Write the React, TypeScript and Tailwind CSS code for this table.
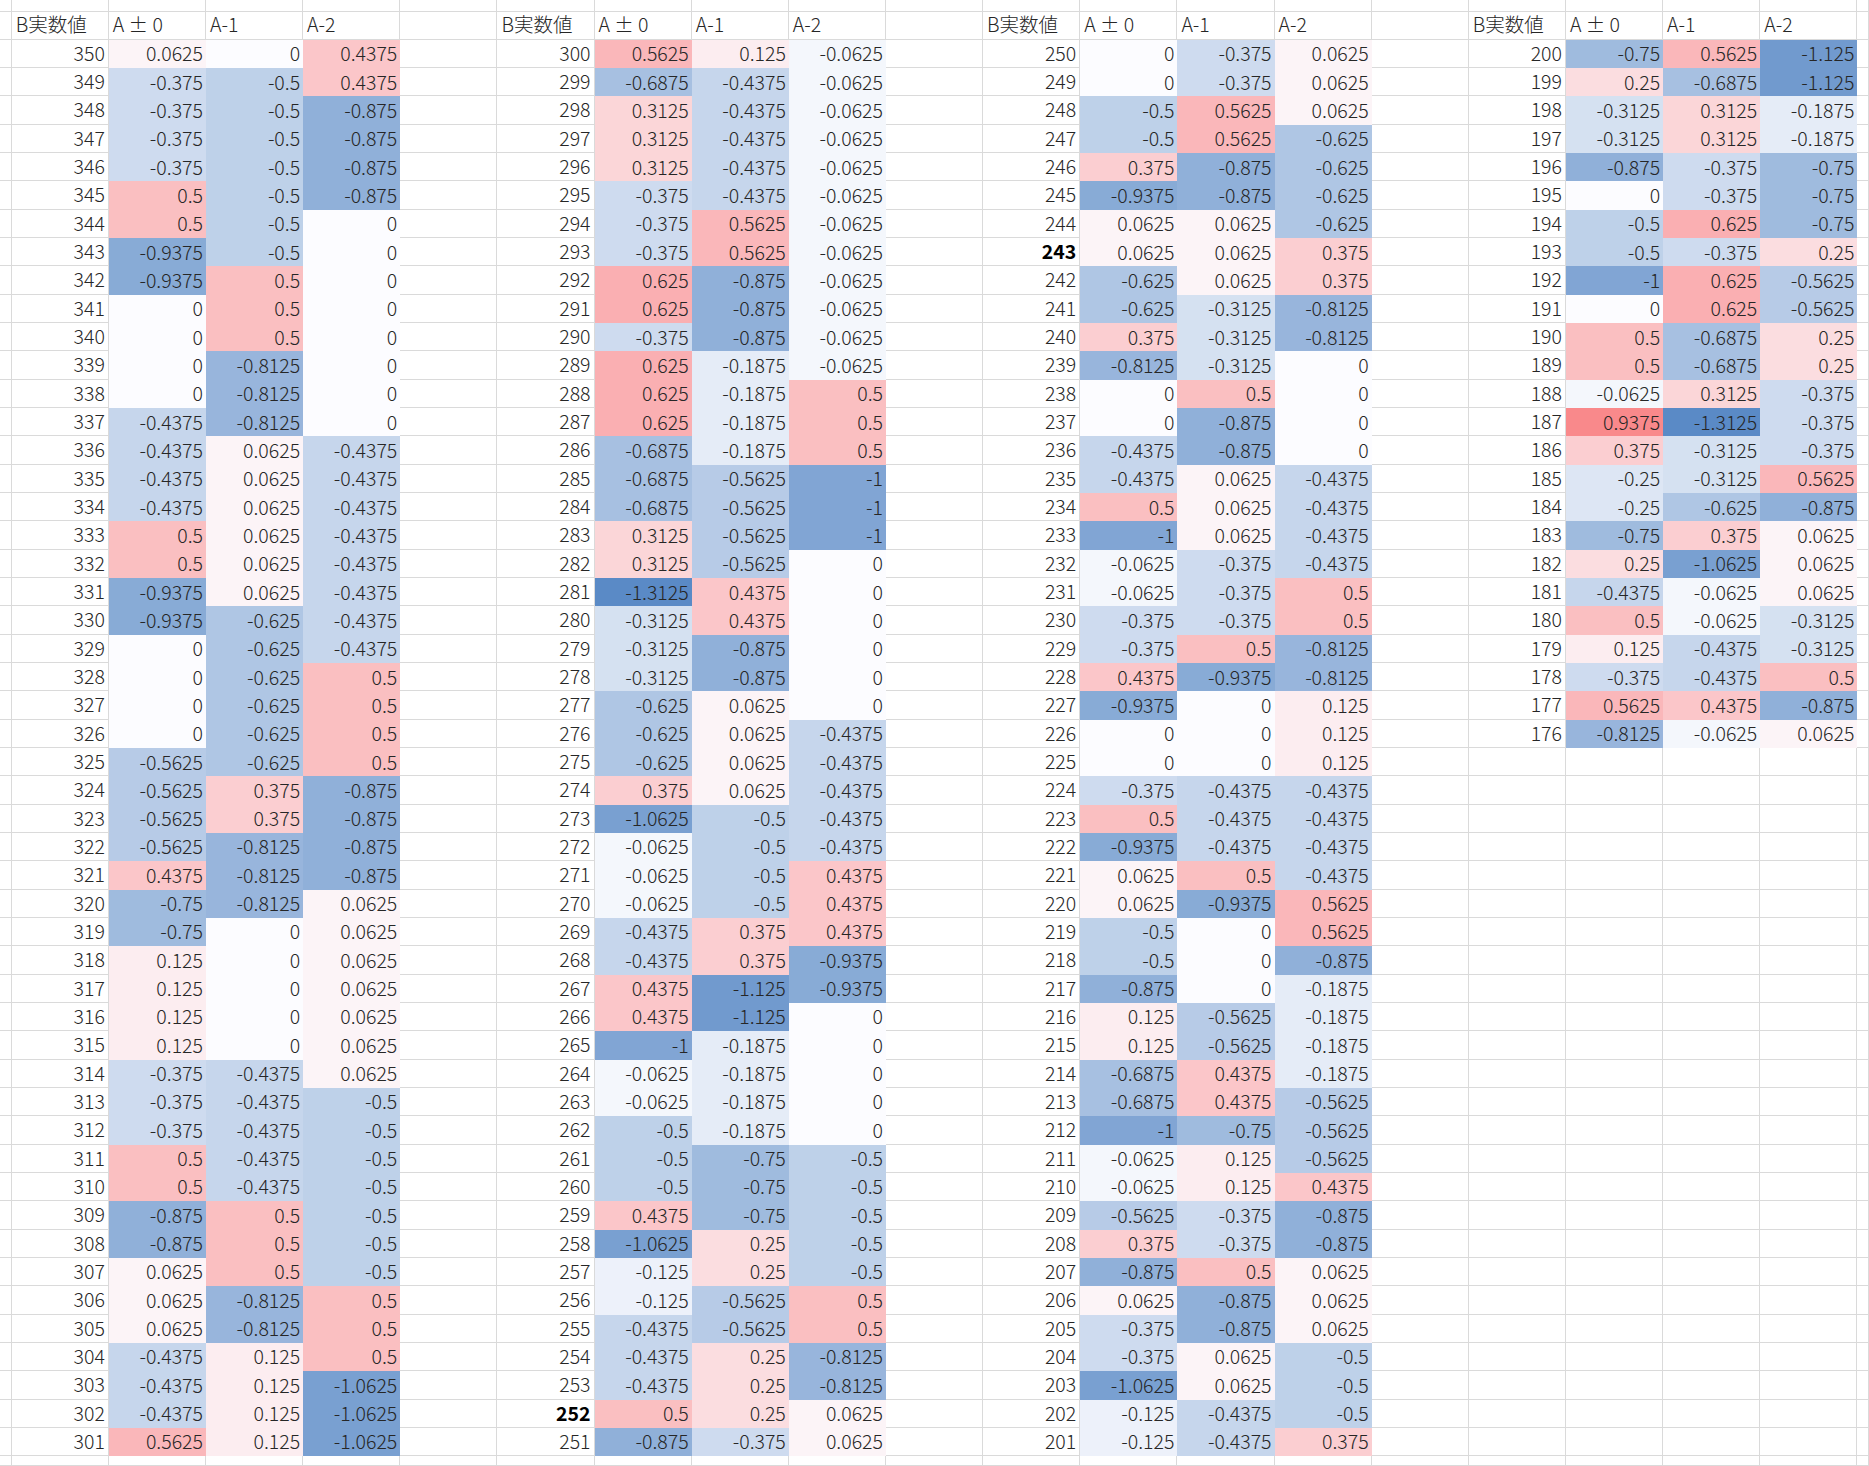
import React from "react";

const G1 = `350 0.0625 0 0.4375
349 -0.375 -0.5 0.4375
348 -0.375 -0.5 -0.875
347 -0.375 -0.5 -0.875
346 -0.375 -0.5 -0.875
345 0.5 -0.5 -0.875
344 0.5 -0.5 0
343 -0.9375 -0.5 0
342 -0.9375 0.5 0
341 0 0.5 0
340 0 0.5 0
339 0 -0.8125 0
338 0 -0.8125 0
337 -0.4375 -0.8125 0
336 -0.4375 0.0625 -0.4375
335 -0.4375 0.0625 -0.4375
334 -0.4375 0.0625 -0.4375
333 0.5 0.0625 -0.4375
332 0.5 0.0625 -0.4375
331 -0.9375 0.0625 -0.4375
330 -0.9375 -0.625 -0.4375
329 0 -0.625 -0.4375
328 0 -0.625 0.5
327 0 -0.625 0.5
326 0 -0.625 0.5
325 -0.5625 -0.625 0.5
324 -0.5625 0.375 -0.875
323 -0.5625 0.375 -0.875
322 -0.5625 -0.8125 -0.875
321 0.4375 -0.8125 -0.875
320 -0.75 -0.8125 0.0625
319 -0.75 0 0.0625
318 0.125 0 0.0625
317 0.125 0 0.0625
316 0.125 0 0.0625
315 0.125 0 0.0625
314 -0.375 -0.4375 0.0625
313 -0.375 -0.4375 -0.5
312 -0.375 -0.4375 -0.5
311 0.5 -0.4375 -0.5
310 0.5 -0.4375 -0.5
309 -0.875 0.5 -0.5
308 -0.875 0.5 -0.5
307 0.0625 0.5 -0.5
306 0.0625 -0.8125 0.5
305 0.0625 -0.8125 0.5
304 -0.4375 0.125 0.5
303 -0.4375 0.125 -1.0625
302 -0.4375 0.125 -1.0625
301 0.5625 0.125 -1.0625`;

const G2 = `300 0.5625 0.125 -0.0625
299 -0.6875 -0.4375 -0.0625
298 0.3125 -0.4375 -0.0625
297 0.3125 -0.4375 -0.0625
296 0.3125 -0.4375 -0.0625
295 -0.375 -0.4375 -0.0625
294 -0.375 0.5625 -0.0625
293 -0.375 0.5625 -0.0625
292 0.625 -0.875 -0.0625
291 0.625 -0.875 -0.0625
290 -0.375 -0.875 -0.0625
289 0.625 -0.1875 -0.0625
288 0.625 -0.1875 0.5
287 0.625 -0.1875 0.5
286 -0.6875 -0.1875 0.5
285 -0.6875 -0.5625 -1
284 -0.6875 -0.5625 -1
283 0.3125 -0.5625 -1
282 0.3125 -0.5625 0
281 -1.3125 0.4375 0
280 -0.3125 0.4375 0
279 -0.3125 -0.875 0
278 -0.3125 -0.875 0
277 -0.625 0.0625 0
276 -0.625 0.0625 -0.4375
275 -0.625 0.0625 -0.4375
274 0.375 0.0625 -0.4375
273 -1.0625 -0.5 -0.4375
272 -0.0625 -0.5 -0.4375
271 -0.0625 -0.5 0.4375
270 -0.0625 -0.5 0.4375
269 -0.4375 0.375 0.4375
268 -0.4375 0.375 -0.9375
267 0.4375 -1.125 -0.9375
266 0.4375 -1.125 0
265 -1 -0.1875 0
264 -0.0625 -0.1875 0
263 -0.0625 -0.1875 0
262 -0.5 -0.1875 0
261 -0.5 -0.75 -0.5
260 -0.5 -0.75 -0.5
259 0.4375 -0.75 -0.5
258 -1.0625 0.25 -0.5
257 -0.125 0.25 -0.5
256 -0.125 -0.5625 0.5
255 -0.4375 -0.5625 0.5
254 -0.4375 0.25 -0.8125
253 -0.4375 0.25 -0.8125
*252 0.5 0.25 0.0625
251 -0.875 -0.375 0.0625`;

const G3 = `250 0 -0.375 0.0625
249 0 -0.375 0.0625
248 -0.5 0.5625 0.0625
247 -0.5 0.5625 -0.625
246 0.375 -0.875 -0.625
245 -0.9375 -0.875 -0.625
244 0.0625 0.0625 -0.625
*243 0.0625 0.0625 0.375
242 -0.625 0.0625 0.375
241 -0.625 -0.3125 -0.8125
240 0.375 -0.3125 -0.8125
239 -0.8125 -0.3125 0
238 0 0.5 0
237 0 -0.875 0
236 -0.4375 -0.875 0
235 -0.4375 0.0625 -0.4375
234 0.5 0.0625 -0.4375
233 -1 0.0625 -0.4375
232 -0.0625 -0.375 -0.4375
231 -0.0625 -0.375 0.5
230 -0.375 -0.375 0.5
229 -0.375 0.5 -0.8125
228 0.4375 -0.9375 -0.8125
227 -0.9375 0 0.125
226 0 0 0.125
225 0 0 0.125
224 -0.375 -0.4375 -0.4375
223 0.5 -0.4375 -0.4375
222 -0.9375 -0.4375 -0.4375
221 0.0625 0.5 -0.4375
220 0.0625 -0.9375 0.5625
219 -0.5 0 0.5625
218 -0.5 0 -0.875
217 -0.875 0 -0.1875
216 0.125 -0.5625 -0.1875
215 0.125 -0.5625 -0.1875
214 -0.6875 0.4375 -0.1875
213 -0.6875 0.4375 -0.5625
212 -1 -0.75 -0.5625
211 -0.0625 0.125 -0.5625
210 -0.0625 0.125 0.4375
209 -0.5625 -0.375 -0.875
208 0.375 -0.375 -0.875
207 -0.875 0.5 0.0625
206 0.0625 -0.875 0.0625
205 -0.375 -0.875 0.0625
204 -0.375 0.0625 -0.5
203 -1.0625 0.0625 -0.5
202 -0.125 -0.4375 -0.5
201 -0.125 -0.4375 0.375`;

const G4 = `200 -0.75 0.5625 -1.125
199 0.25 -0.6875 -1.125
198 -0.3125 0.3125 -0.1875
197 -0.3125 0.3125 -0.1875
196 -0.875 -0.375 -0.75
195 0 -0.375 -0.75
194 -0.5 0.625 -0.75
193 -0.5 -0.375 0.25
192 -1 0.625 -0.5625
191 0 0.625 -0.5625
190 0.5 -0.6875 0.25
189 0.5 -0.6875 0.25
188 -0.0625 0.3125 -0.375
187 0.9375 -1.3125 -0.375
186 0.375 -0.3125 -0.375
185 -0.25 -0.3125 0.5625
184 -0.25 -0.625 -0.875
183 -0.75 0.375 0.0625
182 0.25 -1.0625 0.0625
181 -0.4375 -0.0625 0.0625
180 0.5 -0.0625 -0.3125
179 0.125 -0.4375 -0.3125
178 -0.375 -0.4375 0.5
177 0.5625 0.4375 -0.875
176 -0.8125 -0.0625 0.0625`;

type Row = { key: string; bold: boolean; vals: string[] };

function parse(s: string): Row[] {
  return s.split("\n").map((line) => {
    const parts = line.trim().split(/\s+/);
    let key = parts[0];
    let bold = false;
    if (key.startsWith("*")) {
      bold = true;
      key = key.slice(1);
    }
    return { key, bold, vals: parts.slice(1) };
  });
}

const groups = [G1, G2, G3, G4].map(parse);

function heat(v: number): string {
  let r: number, g: number, b: number;
  if (v >= 0) {
    const t = Math.min(v / 1.2, 1);
    r = 252 + (248 - 252) * t;
    g = 252 + (105 - 252) * t;
    b = 255 + (107 - 255) * t;
  } else {
    const t = Math.min(-v / 1.3125, 1);
    r = 252 + (90 - 252) * t;
    g = 252 + (138 - 252) * t;
    b = 255 + (198 - 255) * t;
  }
  return `rgb(${Math.round(r)},${Math.round(g)},${Math.round(b)})`;
}

const NCOLS = 21;
const NROWS = 53;
const headers = ["B実数値", "A ± 0", "A-1", "A-2"];

function cellFor(r: number, c: number): React.ReactNode {
  const gridCls = "border-r border-b border-[#dadada]";
  if (c >= 1 && c <= 19) {
    const g = Math.floor((c - 1) / 5);
    const off = (c - 1) % 5;
    if (off < 4) {
      if (r === 1) {
        return (
          <div
            key={`${r}-${c}`}
            className={`${gridCls} flex items-center pl-[4px] pb-[2px] whitespace-pre`}
          >
            {headers[off]}
          </div>
        );
      }
      const ri = r - 2;
      const grp = groups[g];
      if (ri >= 0 && ri < grp.length) {
        const row = grp[ri];
        if (off === 0) {
          return (
            <div
              key={`${r}-${c}`}
              className={`${gridCls} flex items-center justify-end pr-[3px] pb-[2px] ${
                row.bold ? "font-bold text-black" : ""
              }`}
            >
              {row.key}
            </div>
          );
        }
        const s = row.vals[off - 1];
        return (
          <div
            key={`${r}-${c}`}
            className="flex items-center justify-end pr-[3px] pb-[2px]"
            style={{ backgroundColor: heat(parseFloat(s)) }}
          >
            {s}
          </div>
        );
      }
    }
  }
  return <div key={`${r}-${c}`} className={gridCls} />;
}

export default function App() {
  const cells: React.ReactNode[] = [];
  for (let r = 0; r < NROWS; r++) {
    for (let c = 0; c < NCOLS; c++) {
      cells.push(cellFor(r, c));
    }
  }
  return (
    <div
      className="w-[1869px] h-[1466px] overflow-hidden bg-white text-[19.5px] leading-[1.2] font-light text-[#262626]"
      style={{ fontFamily: '"Noto Sans CJK JP", "Noto Sans", sans-serif' }}
    >
      <div className="grid w-full h-full grid-cols-[11.7px_repeat(19,97.15px)_1fr] grid-rows-[11.5px_repeat(51,28.33px)_1fr]">
        {cells}
      </div>
    </div>
  );
}
